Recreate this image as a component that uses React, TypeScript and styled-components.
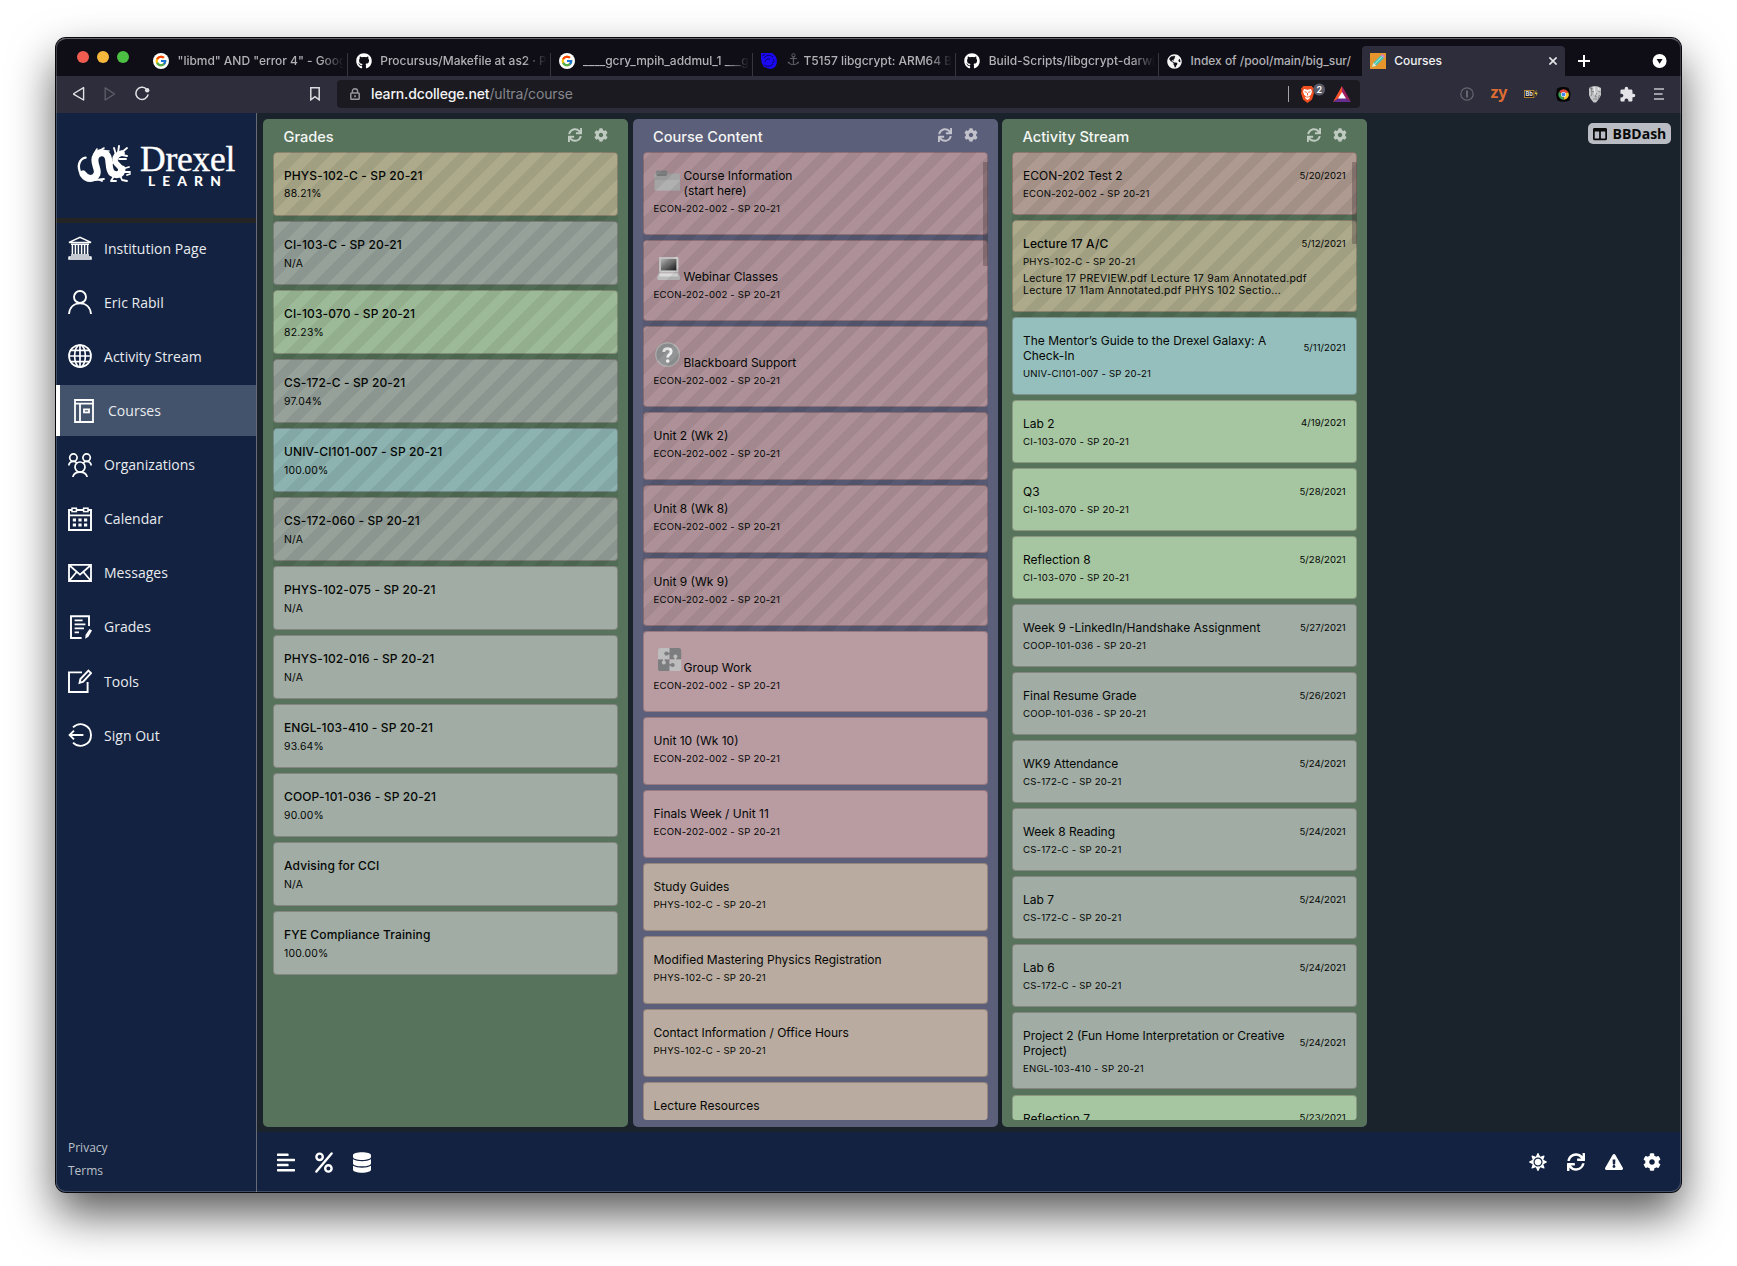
import React from "react";
import styled, { createGlobalStyle, css } from "styled-components";
import {
  FaGithub,
  FaCog,
  FaSync,
  FaDatabase,
  FaAlignLeft,
  FaSun,
  FaExclamationTriangle,
  FaColumns,
  FaGlobeAmericas,
} from "react-icons/fa";
import { FcGoogle } from "react-icons/fc";
import { MdExtension } from "react-icons/md";

const Global = createGlobalStyle`
  *, *::before, *::after { box-sizing: border-box; }
  html, body { margin: 0; padding: 0; background: #fff; }
  body { font-family: Inter, "Liberation Sans", sans-serif; overflow: hidden; }
  svg { display: block; flex: none; }
`;

/* ---------- window ---------- */

const Desktop = styled.div`
  width: 1737px;
  height: 1266px;
  padding: 38px 56px 74px;
`;

const Window = styled.div`
  width: 1625px;
  height: 1154px;
  border-radius: 10px;
  overflow: hidden;
  display: flex;
  flex-direction: column;
  background: #122240;
`;

const WindowShell = styled.div`
  position: relative;
  width: 1625px;
  height: 1154px;
  border-radius: 10px;
  box-shadow: 0 0 0 1px #08080c, 0 22px 46px rgba(0, 0, 0, 0.66);
  &::after {
    content: "";
    position: absolute;
    inset: 0;
    border-radius: 10px;
    border: 1px solid rgba(255, 255, 255, 0.2);
    border-top-color: rgba(255, 255, 255, 0.36);
    pointer-events: none;
  }
`;

/* ---------- tab strip ---------- */

const TabStrip = styled.div`
  height: 38px;
  flex: none;
  display: flex;
  align-items: flex-end;
  background: #0f0e17;
`;

const Lights = styled.div`
  width: 89px;
  height: 38px;
  padding: 13px 0 0 21px;
  display: flex;
  gap: 8px;
`;

const Light = styled.i<{ $c: string }>`
  width: 12px;
  height: 12px;
  border-radius: 50%;
  background: ${(p) => p.$c};
`;

const Tab = styled.div<{ $active?: boolean; $line?: boolean }>`
  width: 202.8px;
  height: 30px;
  padding: 0 8px;
  display: flex;
  align-items: center;
  gap: 8.5px;
  position: relative;
  border-radius: 4px 4px 0 0;
  background: ${(p) => (p.$active ? "#2d2d3b" : "transparent")};
  color: ${(p) => (p.$active ? "#f1f1f3" : "#b2b2b6")};
  ${(p) =>
    p.$line &&
    css`
      &::after {
        content: "";
        position: absolute;
        right: 0;
        bottom: 0;
        width: 1px;
        height: 23px;
        background: #37363f;
      }
    `}
`;

const TabTitle = styled.span<{ $fade?: boolean }>`
  flex: 1;
  min-width: 0;
  margin-right: -4px;
  overflow: hidden;
  white-space: nowrap;
  font-size: 12px;
  line-height: 18px;
  font-weight: 500;
  letter-spacing: -0.03px;
  ${(p) =>
    p.$fade &&
    css`
      mask-image: linear-gradient(90deg, #000 86%, transparent 100%);
    `}
`;

const AnchorGlyph = styled.span`
  font-family: "DejaVu Sans", sans-serif;
  font-size: 16px;
  line-height: 14px;
  color: #5c5c64;
`;

const NewTab = styled.div`
  flex: 1;
  height: 30px;
  padding: 0 9px 0 13px;
  display: flex;
  align-items: center;
  justify-content: space-between;
`;

/* ---------- toolbar ---------- */

const Toolbar = styled.div`
  height: 37px;
  flex: none;
  display: flex;
  align-items: center;
  background: #2d2d3b;
  padding-left: 16.5px;
  padding-bottom: 1px;
`;

const NavButtons = styled.div`
  width: 264.5px;
  display: flex;
  align-items: center;
  gap: 19px;
`;

const BookmarkSlot = styled.div`
  margin-left: auto;
  padding-right: 17px;
`;

const AddressBar = styled.div`
  width: 1023px;
  height: 28px;
  padding: 0 8px 0 13px;
  display: flex;
  align-items: center;
  border-radius: 4px;
  background: #1a1a20;
`;

const Url = styled.span`
  margin-left: 11px;
  flex: 1;
  font-size: 14px;
  line-height: 20px;
  letter-spacing: -0.15px;
  color: #85868c;
  b {
    font-weight: 500;
    color: #f3f3f5;
  }
`;

const Shields = styled.div`
  display: flex;
  align-items: center;
  gap: 6.5px;
  padding-right: 1px;
  i {
    width: 1px;
    height: 16px;
    margin-right: 4px;
    background: #a4a4aa;
  }
`;

const Extensions = styled.div`
  margin-left: auto;
  padding-right: 6px;
  display: flex;
`;

const Extension = styled.div`
  width: 32px;
  height: 28px;
  display: flex;
  align-items: center;
  justify-content: center;
  color: #e4e4e8;
`;

const ZyMark = styled.span`
  font: 700 16px/20px "Noto Sans", sans-serif;
  color: #dc6c33;
  margin-top: -4px;
`;

/* ---------- page ---------- */

const Page = styled.div`
  flex: 1;
  min-height: 0;
  display: flex;
`;

const Sidebar = styled.aside`
  width: 201px;
  flex: none;
  display: flex;
  flex-direction: column;
  border-right: 1px solid #666b76;
  background: #122240;
  font-family: "Open Sans", "Noto Sans", sans-serif;
`;

const Brand = styled.div`
  height: 110px;
  padding: 30px 0 0 21px;
  display: flex;
  gap: 9px;
  border-bottom: 5px solid #242424;
  color: #fff;
`;

const BrandText = styled.div`
  display: flex;
  flex-direction: column;
`;

const BrandName = styled.span`
  font: 400 35.5px/32px "Liberation Serif", serif;
  letter-spacing: -0.25px;
  -webkit-text-stroke: 0.4px #fff;
`;

const BrandSub = styled.span`
  font: 900 13.8px/14px Lato, sans-serif;
  letter-spacing: 7.1px;
  padding-left: 8px;
  margin-top: -1px;
`;

const Nav = styled.nav`
  display: flex;
  flex-direction: column;
  gap: 3.5px;
`;

const NavItem = styled.a<{ $active?: boolean }>`
  height: 50.6px;
  padding-left: ${(p) => (p.$active ? 12 : 12)}px;
  display: flex;
  align-items: center;
  gap: 12px;
  font-size: 14px;
  letter-spacing: 0.03px;
  color: #e9ebef;
  ${(p) =>
    p.$active &&
    css`
      border-left: 4px solid #fff;
      background: #43536c;
    `}
  svg {
    color: #fff;
  }
`;

const Legal = styled.div`
  margin-top: auto;
  padding: 0 0 10px 12px;
  display: flex;
  flex-direction: column;
  font-size: 12px;
  line-height: 23px;
  color: #bcc1c9;
`;

const Main = styled.main`
  flex: 1;
  display: flex;
  flex-direction: column;
  background: #1a232c;
`;

const Board = styled.div`
  flex: 1;
  min-height: 0;
  padding: 6px 10px 5px 6px;
  display: flex;
  gap: 4.5px;
`;

const Column = styled.section<{ $c: string }>`
  width: 365px;
  height: 1008px;
  flex: none;
  padding: 0 10px 7px;
  display: flex;
  flex-direction: column;
  border-radius: 5px;
  background: ${(p) => p.$c};
`;

const ColumnHead = styled.header`
  height: 33.3px;
  flex: none;
  padding: 3px 10px 0 10.5px;
  display: flex;
  align-items: center;
  gap: 12px;
  color: rgba(255, 255, 255, 0.62);
  h2 {
    margin: 0;
    flex: 1;
    font-size: 14.6px;
    line-height: 20px;
    font-weight: 500;
    color: #f4f6f4;
    letter-spacing: 0;
  }
  svg {
    margin-top: -5px;
  }
`;

const List = styled.div`
  position: relative;
  flex: 1;
  min-height: 0;
  overflow: hidden;
  border-radius: 4px;
`;

const Thumb = styled.div<{ $h: number }>`
  position: absolute;
  right: 0;
  top: 9.5px;
  width: 5px;
  height: ${(p) => p.$h}px;
  border-radius: 1px;
  background: rgba(60, 45, 50, 0.32);
`;

const Slot = styled.div<{ $striped?: boolean }>`
  position: relative;
  padding-bottom: 5.64px;
  ${(p) =>
    p.$striped &&
    css`
      &::after {
        content: "";
        position: absolute;
        inset: 0;
        background:
          repeating-linear-gradient(-45deg, transparent 0 10px, rgba(0, 0, 0, 0.065) 10px 20px),
          rgba(0, 0, 0, 0.06);
      }
    `}
`;

const Card = styled.article<{ $c: string; $h: number }>`
  height: ${(p) => p.$h}px;
  padding: 14.8px 10.3px 0 10px;
  border: 1px solid rgba(60, 30, 35, 0.27);
  border-radius: 4px;
  background: ${(p) => p.$c};
  background-clip: border-box;
  color: #050705;
`;

const TitleRow = styled.div`
  display: flex;
  align-items: flex-end;
`;

const Title = styled.h3<{ $strong?: boolean }>`
  margin: 0;
  flex: 1;
  font-size: 12px;
  line-height: 15.1px;
  font-weight: ${(p) => (p.$strong ? 500 : 400)};
  letter-spacing: ${(p) => (p.$strong ? 0.12 : 0)}px;
`;

const When = styled.time`
  align-self: center;
  font-size: 9.6px;
  line-height: 12px;
`;

const Sub = styled.p<{ $big?: boolean }>`
  margin: ${(p) => (p.$big ? 4.3 : 3.6)}px 0 0;
  font-size: ${(p) => (p.$big ? 10.4 : 9.6)}px;
  line-height: 14px;
  letter-spacing: 0.2px;
`;

const Excerpt = styled.p`
  margin: 4px 0 0;
  font-size: 10.5px;
  line-height: 12px;
  letter-spacing: 0.25px;
  white-space: nowrap;
`;

const DashBadge = styled.div`
  margin-left: auto;
  margin-top: 4px;
  width: 83px;
  height: 21px;
  padding-left: 5px;
  display: flex;
  align-items: center;
  gap: 5.5px;
  border-radius: 5px;
  background: #b9bcc2;
  color: #0a0a0a;
  font: 700 14px/20px "Open Sans", "Noto Sans", sans-serif;
`;

const Footer = styled.footer`
  height: 60px;
  flex: none;
  padding: 0 20px 0;
  display: flex;
  align-items: center;
  justify-content: space-between;
  background: #122240;
  color: #fff;
`;

const IconGroup = styled.div`
  display: flex;
  align-items: center;
  gap: 20px;
  svg {
    width: 18px;
  }
`;

/* ---------- drawings ---------- */

const Dragon = () => (
  <svg width="54" height="40" viewBox="0 -1 54 40" fill="none" stroke="#fff" strokeLinecap="round" strokeLinejoin="round">
    <path d="M8.5 13.6 C2 15 0.5 22 3 28 C5 32 9 34 14 34" strokeWidth="2.4" />
    <path d="M6 30 C10 36 17 36 20 30 C22 25 15 18 19 12 C22 7 29 8 31 13 C33 18 31 25 35 29 C39 32 45 31 45 25" strokeWidth="7" />
    <path d="M44 27 C45 22 38 21 38 16 C38 12 41 10 45 9" strokeWidth="5.6" />
    <path d="M39 11 L37 4 M41 9 L42 2 M44 9 L50 4 M45 11 L50 12 M42 15 L49 15 M36 18 L33 22" strokeWidth="1.9" />
    <path d="M45 25 L52 23 M46 28 L53 28 M43 31 L45 36 L50 37 M37 32 L34 37 L39 37 M20 35 L25 37 M18 36 L27 35 M50 31 L53 30" strokeWidth="1.8" />
    <path d="M17 10 L20 5 M22 7 L27 4 M28 7 L32 7" strokeWidth="1.6" />
  </svg>
);

const navSvg = { width: 24, height: 24, viewBox: "0 0 24 24", fill: "none", stroke: "currentColor", strokeWidth: 1.9 } as const;

const InstitutionIcon = () => (
  <svg {...navSvg} strokeWidth="1.5">
    <path d="M1 6.4 L12 1.4 L23 6.4 Z" />
    <path d="M3 8.2 H21" />
    <path d="M4.4 9 V18 M7.4 9 V18 M10.4 9 V18 M13.6 9 V18 M16.6 9 V18 M19.6 9 V18" />
    <path d="M3 19 H21 M1 20.4 V23 H23 V20.4 M1 21 H23" />
  </svg>
);
const PersonIcon = () => (
  <svg {...navSvg}>
    <circle cx="12" cy="7" r="6" />
    <path d="M1 24 C1.6 17 6 13.4 12 13.4 C18 13.4 22.4 17 23 24" />
  </svg>
);
const GlobeIcon = () => (
  <svg {...navSvg} strokeWidth="1.7">
    <circle cx="12" cy="12" r="11" />
    <ellipse cx="12" cy="12" rx="5.4" ry="11" />
    <path d="M12 1 V23 M1 12 H23 M3 6.4 H21 M3 17.6 H21" />
  </svg>
);
const CoursesIcon = () => (
  <svg {...navSvg} strokeWidth="1.8">
    <path d="M21 4.6 V1 H3 V23 H21 V4.6 H3" />
    <path d="M8 5 V23" />
    <rect x="12" y="10.4" width="5" height="3" />
  </svg>
);
const GroupIcon = () => (
  <svg {...navSvg} strokeWidth="1.7">
    <circle cx="5.4" cy="4.6" r="3.7" />
    <circle cx="18.6" cy="4.6" r="3.7" />
    <circle cx="12" cy="14" r="5" />
    <path d="M0.8 12.5 C1.2 9.6 3 8.4 5.4 8.4 C7 8.4 8 9 8.8 10 M23.2 12.5 C22.8 9.6 21 8.4 18.6 8.4 C17 8.4 16 9 15.2 10" />
    <path d="M4.8 24 C5.6 21 8 19.2 12 19.2 C16 19.2 18.4 21 19.2 24" />
  </svg>
);
const CalendarIcon = () => (
  <svg {...navSvg}>
    <path d="M4 3 H1 V23 H23 V3 H20 M8.6 3 H15.4 M1 8.4 H23" />
    <rect x="4" y="1.2" width="4.4" height="3.4" strokeWidth="1.5" />
    <rect x="15.6" y="1.2" width="4.4" height="3.4" strokeWidth="1.5" />
    <path d="M4.8 13 H8 M10.4 13 H13.6 M16 13 H19.2 M4.8 18 H8 M10.4 18 H13.6 M16 18 H19.2" strokeWidth="2.8" />
  </svg>
);
const MailIcon = () => (
  <svg {...navSvg} strokeWidth="1.8">
    <path d="M1 3.8 H23 V20 H1 Z M1 4 L12 13.6 L23 4 M1 20 L8.6 11 M23 20 L15.4 11" />
  </svg>
);
const GradesIcon = () => (
  <svg {...navSvg}>
    <path d="M21 11 V1.2 H3 V23 H13.6" />
    <path d="M6.6 5.4 H14.6 M6.6 9.4 H17.4 M6.6 13.4 H16 M6.6 17.4 H11" strokeWidth="1.7" />
    <path d="M17.2 23.8 L17.6 19.8 L21.6 14 L24 15.6 L20.4 21.8 Z" fill="currentColor" stroke="none" />
  </svg>
);
const ToolsIcon = () => (
  <svg {...navSvg}>
    <path d="M14 3.4 H1 V23 H19.6 V13" />
    <path d="M11.6 13.8 L12.4 10 L20.4 1.6 L23 4.2 L15.2 12.6 Z" />
  </svg>
);
const SignOutIcon = () => (
  <svg {...navSvg}>
    <path d="M5 4.4 C12 -2.4 23 2.4 23 12 C23 21.6 12 26.4 5 19.6" />
    <path d="M1.6 12 H15.4 M6 7.6 L1.6 12 L6 16.4" />
  </svg>
);

const FolderArt = () => (
  <svg width="30" height="28" viewBox="0 0 30 28">
    <path d="M2 2 Q2 0.6 3.4 0.6 H12 Q13.4 0.6 13.4 2.4 L13 6 H2 Z" fill="#8b8c8e" />
    <rect x="0.6" y="3.4" width="25.4" height="17" rx="1" fill="#b0b0b0" />
    <rect x="0.6" y="10" width="25.4" height="10.4" rx="1" fill="#bcbcbc" />
    <path d="M1.4 3.4 H13.6 L12 6 H3 Z" fill="#868789" />
  </svg>
);
const LaptopArt = () => (
  <svg width="30" height="28" viewBox="0 0 30 28">
    <defs>
      <linearGradient id="screen" x1="0" y1="0" x2="1" y2="1">
        <stop offset="0" stopColor="#d0d0d0" />
        <stop offset="0.7" stopColor="#4a4a4a" />
        <stop offset="1" stopColor="#1c1c1c" />
      </linearGradient>
    </defs>
    <rect x="5" y="1" width="19.4" height="15.6" rx="1.4" fill="#dadada" />
    <rect x="7" y="3" width="15.4" height="11.4" fill="url(#screen)" />
    <path d="M5 16.4 H24.4 L26.4 22 Q26.4 24 24.4 24 H5 Q3 24 3 22 Z" fill="#c8c8c8" />
    <path d="M6 17.6 H23.4 L24.4 20.6 H5 Z" fill="#eaeaea" />
  </svg>
);
const HelpArt = () => (
  <svg width="30" height="28" viewBox="0 0 30 28">
    <circle cx="13.6" cy="12.6" r="11.8" fill="#9d9e9f" stroke="#c4c4c4" strokeWidth="1.2" />
    <path d="M9.8 10 Q9.8 6.6 13.6 6.6 Q17.2 6.6 17.2 9.6 Q17.2 11.4 15.2 12.6 Q13.7 13.6 13.7 15.4" fill="none" stroke="#fff" strokeWidth="2.8" />
    <circle cx="13.7" cy="19" r="1.8" fill="#fff" />
  </svg>
);
const PuzzleArt = () => (
  <svg width="30" height="28" viewBox="0 0 30 28">
    <path d="M4 3.6 Q4 1 6.6 1 H15.6 V12.4 H4 Z" fill="#bdbdbd" />
    <path d="M15.6 1 H24.6 Q27.2 1 27.2 3.6 V12.4 H15.6 Z" fill="#7c7d7e" />
    <path d="M4 12.4 H15.6 V24 H6.6 Q4 24 4 21.4 Z" fill="#7c7d7e" />
    <path d="M15.6 12.4 H27.2 V21.4 Q27.2 24 24.6 24 H15.6 Z" fill="#bdbdbd" />
    <path d="M11.6 6.6 H16 M15 18 H19" stroke="#7c7d7e" strokeWidth="1.6" />
    <circle cx="12.4" cy="6.6" r="2.1" fill="#7c7d7e" />
    <circle cx="18.6" cy="18" r="2.1" fill="#7c7d7e" />
    <circle cx="21.4" cy="9.4" r="2" fill="#bdbdbd" />
    <path d="M20.6 9 H22.2 V13 H20.6 Z" fill="#bdbdbd" />
    <circle cx="9.8" cy="15.4" r="2" fill="#bdbdbd" />
    <path d="M9 11.8 H10.6 V15 H9 Z" fill="#bdbdbd" />
  </svg>
);

const PercentIcon = () => (
  <svg height="21" viewBox="0 0 18 21" fill="none" stroke="currentColor" strokeWidth="2.4" strokeLinecap="round">
    <path d="M1.4 19.6 L16.6 1.4" />
    <circle cx="4.6" cy="4.8" r="3.2" />
    <circle cx="13.4" cy="16.4" r="3.2" />
  </svg>
);

const GoogleMark = () => (
  <svg width="16" height="16" viewBox="0 0 16 16">
    <circle cx="8" cy="8" r="8" fill="#fff" />
    <FcGoogle x="1.6" y="1.6" width="12.8" height="12.8" size={12.8} />
  </svg>
);
const BlueMark = () => (
  <svg width="16" height="16" viewBox="0 0 16 16">
    <path d="M0 0 H11 Q16 3 16 9 Q15 16 9 16 L3 14 Q0 10 0 6 Z" fill="#1a09f2" />
    <path d="M3 5 Q7 0 12 4 M4 9 Q5 5 9 6 M3 12 Q8 15 12 11 M12 6 Q15 9 11 10 M1 3 L4 1" fill="none" stroke="#0b0668" strokeWidth="1" />
  </svg>
);
const PencilMark = () => (
  <svg width="16" height="16" viewBox="0 0 16 16">
    <rect width="16" height="16" fill="#e6952c" />
    <path d="M2 14 L3.4 9.8 L11 2.2 L14 5 L6.2 12.8 Z" fill="#49c3b6" />
    <path d="M11 2.2 L12.2 1.2 Q14 1.6 14.8 3.8 L14 5 Z" fill="#d77be0" />
    <path d="M2 14 L3.4 9.8 L6.2 12.8 Z" fill="#f3e3c4" />
    <path d="M4.6 11 L12.4 3.4" stroke="#b8f0d9" strokeWidth="1" />
  </svg>
);
const BraveMark = () => (
  <svg width="27" height="22" viewBox="0 0 27 22">
    <path d="M3.4 3 H11.6 L14 5.8 L13.4 8 L14 10 L12 16.4 L7.5 20 L3 16.4 L1 10 L1.6 8 L1 5.8 Z" fill="#f0501f" />
    <path d="M4 6 L7.5 6.8 L11 6 L12 8.4 L10.8 12 L9 13.2 L10 15 L7.5 17 L5 15 L6 13.2 L4.2 12 L3 8.4 Z" fill="#fff" />
    <path d="M4.6 8.6 L6.8 9.4 M10.4 8.6 L8.2 9.4 M7.5 10 V12.4 M6.2 14 H8.8" stroke="#f0501f" strokeWidth="0.9" />
    <rect x="13.4" y="0.6" width="11.6" height="11.8" rx="5.4" fill="#595b69" />
    <text x="19.3" y="9.8" textAnchor="middle" fontFamily="Inter" fontWeight="600" fontSize="9" fill="#fff">2</text>
  </svg>
);
const BatMark = () => (
  <svg width="18" height="16" viewBox="0 0 18 16">
    <path d="M9 0 L0 16 L9 10 Z" fill="#f7522b" />
    <path d="M9 0 L18 16 L9 10 Z" fill="#9e1f63" />
    <path d="M0 16 H18 L9 10 Z" fill="#662d91" />
    <path d="M9 6 L13 12.6 H5 Z" fill="#fff" />
  </svg>
);
const ChromeMark = () => (
  <svg width="15" height="15" viewBox="0 0 15 15">
    <path d="M1 1.5 Q7 -1.5 12.5 1 L14.6 6 L13.6 13.5 Q7 16 1.5 13.6 L0 8 Z" fill="#060606" />
    <path d="M7.5 7.5 L3 5 A5.2 5.2 0 0 1 12.2 5 Z" fill="#e0463a" />
    <path d="M7.5 7.5 L12.2 5 A5.2 5.2 0 0 1 7.5 12.7 Z" fill="#f4c430" />
    <path d="M7.5 7.5 L3 5 A5.2 5.2 0 0 0 7.5 12.7 Z" fill="#38a353" />
    <circle cx="7.5" cy="7.5" r="2.5" fill="#fff" />
    <circle cx="7.5" cy="7.5" r="1.9" fill="#4286f4" />
  </svg>
);
const FaceMark = () => (
  <svg width="14" height="18" viewBox="0 0 14 18">
    <path d="M1 3 Q7 -1 13 3 L13 10 Q11 15 8 17.4 L5.6 17.4 Q2 14 1 10 Z" fill="#c4c5c7" />
    <path d="M1.4 3 L5 4 M3 1.6 L4 9 L3 11 M8.6 8 L7 11.6 L9 12 M10.4 6.6 L12.6 7 M4 6.6 H6.4 M5.4 14 L9 14 M11.4 10 L10 15" fill="none" stroke="#696a70" strokeWidth="0.7" />
    <path d="M6 2 L7.2 9.6 M10.4 2.6 L11 5" stroke="#f2f2f2" strokeWidth="1.1" />
  </svg>
);
const BbMark = () => (
  <svg width="14" height="10" viewBox="0 0 14 10">
    <rect x="0.5" y="1.5" width="9.4" height="7" fill="#15151b" stroke="#b98a35" strokeWidth="0.9" />
    <text x="1.5" y="7.1" fontFamily="Inter" fontWeight="700" fontSize="5.6" fill="#e8e8e8">Bb</text>
    <path d="M12.4 0.6 L10.8 5 H12.4 L11.6 8 L13.8 3.8 H12.2 Z" fill="#e4c13c" />
  </svg>
);

/* ---------- data ---------- */

const TERM = "SP 20-21";
const pale = {
  gray: "#a0aca4",
  khaki: "#b7b594",
  green: "#a6c6a1",
  teal: "#95bfbc",
  rose: "#b99ba2",
  clay: "#b9a499",
  sand: "#b9ab9f",
};

type Entry = {
  title: React.ReactNode;
  sub: string;
  c: string;
  h?: number;
  striped?: boolean;
  date?: string;
  strong?: boolean;
  art?: React.ReactNode;
  excerpt?: React.ReactNode;
};

const grades: Entry[] = [
  { title: `PHYS-102-C - ${TERM}`, sub: "88.21%", c: pale.khaki, striped: true },
  { title: `CI-103-C - ${TERM}`, sub: "N/A", c: pale.gray, striped: true },
  { title: `CI-103-070 - ${TERM}`, sub: "82.23%", c: pale.green, striped: true },
  { title: `CS-172-C - ${TERM}`, sub: "97.04%", c: pale.gray, striped: true },
  { title: `UNIV-CI101-007 - ${TERM}`, sub: "100.00%", c: pale.teal, striped: true },
  { title: `CS-172-060 - ${TERM}`, sub: "N/A", c: pale.gray, striped: true },
  { title: `PHYS-102-075 - ${TERM}`, sub: "N/A", c: pale.gray },
  { title: `PHYS-102-016 - ${TERM}`, sub: "N/A", c: pale.gray },
  { title: `ENGL-103-410 - ${TERM}`, sub: "93.64%", c: pale.gray },
  { title: `COOP-101-036 - ${TERM}`, sub: "90.00%", c: pale.gray },
  { title: "Advising for CCI", sub: "N/A", c: pale.gray },
  { title: "FYE Compliance Training", sub: "100.00%", c: pale.gray },
];

const ECON = `ECON-202-002 - ${TERM}`;
const PHYS = `PHYS-102-C - ${TERM}`;
const content: Entry[] = [
  { title: <>Course Information<br />(start here)</>, sub: ECON, c: pale.rose, h: 82.4, striped: true, art: <FolderArt /> },
  { title: "Webinar Classes", sub: ECON, c: pale.rose, h: 80.4, striped: true, art: <LaptopArt /> },
  { title: "Blackboard Support", sub: ECON, c: pale.rose, h: 80.4, striped: true, art: <HelpArt /> },
  { title: "Unit 2 (Wk 2)", sub: ECON, c: pale.rose, striped: true },
  { title: "Unit 8 (Wk 8)", sub: ECON, c: pale.rose, striped: true },
  { title: "Unit 9 (Wk 9)", sub: ECON, c: pale.rose, striped: true },
  { title: "Group Work", sub: ECON, c: pale.rose, h: 80.4, art: <PuzzleArt /> },
  { title: "Unit 10 (Wk 10)", sub: ECON, c: pale.rose },
  { title: "Finals Week / Unit 11", sub: ECON, c: pale.rose },
  { title: "Study Guides", sub: PHYS, c: pale.sand },
  { title: "Modified Mastering Physics Registration", sub: PHYS, c: pale.sand },
  { title: "Contact Information / Office Hours", sub: PHYS, c: pale.sand },
  { title: "Lecture Resources", sub: PHYS, c: pale.sand },
];

const CI = `CI-103-070 - ${TERM}`;
const CS = `CS-172-C - ${TERM}`;
const COOP = `COOP-101-036 - ${TERM}`;
const stream: Entry[] = [
  { title: "ECON-202 Test 2", sub: ECON, c: pale.clay, striped: true, date: "5/20/2021" },
  {
    title: "Lecture 17 A/C",
    sub: PHYS,
    c: pale.khaki,
    h: 91.4,
    striped: true,
    strong: true,
    date: "5/12/2021",
    excerpt: (
      <>
        Lecture 17 PREVIEW.pdf Lecture 17 9am Annotated.pdf
        <br />
        Lecture 17 11am Annotated.pdf PHYS 102 Sectio...
      </>
    ),
  },
  { title: <>The Mentor’s Guide to the Drexel Galaxy: A<br />Check-In</>, sub: `UNIV-CI101-007 - ${TERM}`, c: pale.teal, h: 77.2, date: "5/11/2021" },
  { title: "Lab 2", sub: CI, c: pale.green, date: "4/19/2021" },
  { title: "Q3", sub: CI, c: pale.green, date: "5/28/2021" },
  { title: "Reflection 8", sub: CI, c: pale.green, date: "5/28/2021" },
  { title: "Week 9 -LinkedIn/Handshake Assignment", sub: COOP, c: pale.gray, date: "5/27/2021" },
  { title: "Final Resume Grade", sub: COOP, c: pale.gray, date: "5/26/2021" },
  { title: "WK9 Attendance", sub: CS, c: pale.gray, date: "5/24/2021" },
  { title: "Week 8 Reading", sub: CS, c: pale.gray, date: "5/24/2021" },
  { title: "Lab 7", sub: CS, c: pale.gray, date: "5/24/2021" },
  { title: "Lab 6", sub: CS, c: pale.gray, date: "5/24/2021" },
  { title: <>Project 2 (Fun Home Interpretation or Creative<br />Project)</>, sub: `ENGL-103-410 - ${TERM}`, c: pale.gray, h: 77.2, date: "5/24/2021" },
  { title: "Reflection 7", sub: CI, c: pale.green, date: "5/23/2021" },
];

const tabs = [
  { icon: <GoogleMark />, title: '"libmd" AND "error 4" - Google' },
  { icon: <FaGithub size={16} color="#fff" />, title: "Procursus/Makefile at as2 · Proc" },
  { icon: <GoogleMark />, title: "____gcry_mpih_addmul_1 ___gcry" },
  { icon: <BlueMark />, title: <><AnchorGlyph>⚓</AnchorGlyph> T5157 libgcrypt: ARM64 Bu</> },
  { icon: <FaGithub size={16} color="#fff" />, title: "Build-Scripts/libgcrypt-darwin" },
];

const navItems = [
  { icon: <InstitutionIcon />, label: "Institution Page" },
  { icon: <PersonIcon />, label: "Eric Rabil" },
  { icon: <GlobeIcon />, label: "Activity Stream" },
  { icon: <CoursesIcon />, label: "Courses", active: true },
  { icon: <GroupIcon />, label: "Organizations" },
  { icon: <CalendarIcon />, label: "Calendar" },
  { icon: <MailIcon />, label: "Messages" },
  { icon: <GradesIcon />, label: "Grades" },
  { icon: <ToolsIcon />, label: "Tools" },
  { icon: <SignOutIcon />, label: "Sign Out" },
];

/* ---------- composition ---------- */

function Panel(props: { name: string; color: string; items: Entry[]; h: number; thumb?: number; big?: boolean }) {
  return (
    <Column $c={props.color}>
      <ColumnHead>
        <h2>{props.name}</h2>
        <FaSync size={14} />
        <FaCog size={14} />
      </ColumnHead>
      <List>
        {props.items.map((e, i) => (
          <Slot key={i} $striped={e.striped}>
            <Card $c={e.c} $h={e.h ?? props.h}>
              <TitleRow>
                {e.art}
                <Title $strong={props.big || e.strong}>{e.title}</Title>
                {e.date && <When>{e.date}</When>}
              </TitleRow>
              <Sub $big={props.big}>{e.sub}</Sub>
              {e.excerpt && <Excerpt>{e.excerpt}</Excerpt>}
            </Card>
          </Slot>
        ))}
        {props.thumb && <Thumb $h={props.thumb} />}
      </List>
    </Column>
  );
}

export default function App() {
  return (
    <Desktop>
      <Global />
      <WindowShell>
        <Window>
          <TabStrip>
            <Lights>
              <Light $c="#f05d50" />
              <Light $c="#f5b83d" />
              <Light $c="#4cc043" />
            </Lights>
            {tabs.map((t, i) => (
              <Tab key={i} $line>
                {t.icon}
                <TabTitle $fade>{t.title}</TabTitle>
              </Tab>
            ))}
            <Tab>
              <FaGlobeAmericas size={15} color="#f4f4f4" />
              <TabTitle>Index of /pool/main/big_sur/</TabTitle>
            </Tab>
            <Tab $active>
              <PencilMark />
              <TabTitle>Courses</TabTitle>
              <svg width="8" height="8" viewBox="0 0 8 8" stroke="#e6e6ea" strokeWidth="1.6">
                <path d="M0.4 0.4 L7.6 7.6 M7.6 0.4 L0.4 7.6" />
              </svg>
            </Tab>
            <NewTab>
              <svg width="12" height="12" viewBox="0 0 12 12" stroke="#fff" strokeWidth="2">
                <path d="M6 0 V12 M0 6 H12" />
              </svg>
              <svg width="20" height="14" viewBox="0 0 20 14">
                <circle cx="7.6" cy="7" r="7" fill="#fff" />
                <path d="M4.6 5 H10.6 L7.6 9.8 Z" fill="#0f0e17" />
              </svg>
            </NewTab>
          </TabStrip>

          <Toolbar>
            <NavButtons>
              <svg width="12" height="16" viewBox="0 0 12 16" fill="none" stroke="#e2e2e6" strokeWidth="1.4" strokeLinejoin="round">
                <path d="M10.6 1.6 V14 L0.9 8.4 Q0.5 8 0.9 7.5 Z" />
              </svg>
              <svg width="12" height="16" viewBox="0 0 12 16" fill="none" stroke="#5d5d69" strokeWidth="1.4" strokeLinejoin="round">
                <path d="M1.2 1.8 V14 L10.6 8 Z" />
              </svg>
              <svg width="15" height="16" viewBox="0 0 15 16" fill="none" stroke="#e2e2e6" strokeWidth="1.5">
                <path d="M11.2 2.9 A6.1 6.1 0 1 0 13.1 8.4" />
                <circle cx="12.2" cy="4.2" r="2.2" fill="#e2e2e6" stroke="none" />
              </svg>
              <BookmarkSlot>
                <svg width="10" height="14" viewBox="0 0 10 14" fill="none" stroke="#dcdce2" strokeWidth="1.5">
                  <path d="M0.8 0.8 H9.2 V12.8 L5 9.6 L0.8 12.8 Z" />
                </svg>
              </BookmarkSlot>
            </NavButtons>
            <AddressBar>
              <svg width="10" height="12" viewBox="0 0 10 12">
                <path d="M2.4 5 V3.2 Q2.4 0.8 5 0.8 Q7.6 0.8 7.6 3.2 V5" fill="none" stroke="#97979d" strokeWidth="1.4" />
                <rect x="0.8" y="5" width="8.4" height="6.2" rx="0.8" fill="none" stroke="#97979d" strokeWidth="1.5" />
                <rect x="4.2" y="7.2" width="1.6" height="2" fill="#97979d" />
              </svg>
              <Url>
                <b>learn.dcollege.net</b>/ultra/course
              </Url>
              <Shields>
                <i />
                <BraveMark />
                <BatMark />
              </Shields>
            </AddressBar>
            <Extensions>
              <Extension>
                <svg width="14" height="14" viewBox="0 0 14 14" fill="none" stroke="#666670" strokeWidth="1.2">
                  <circle cx="7" cy="7" r="6.2" />
                  <path d="M7 3.6 V10.4" strokeWidth="2" />
                </svg>
              </Extension>
              <Extension><ZyMark>zy</ZyMark></Extension>
              <Extension><BbMark /></Extension>
              <Extension><ChromeMark /></Extension>
              <Extension><FaceMark /></Extension>
              <Extension><MdExtension size={17} /></Extension>
              <Extension>
                <svg width="10" height="12" viewBox="0 0 10 12" stroke="#c4c4ca" strokeWidth="1.6">
                  <path d="M0 1 H10 M0 6 H8.6 M0 11 H10" />
                </svg>
              </Extension>
            </Extensions>
          </Toolbar>

          <Page>
            <Sidebar>
              <Brand>
                <Dragon />
                <BrandText>
                  <BrandName>Drexel</BrandName>
                  <BrandSub>LEARN</BrandSub>
                </BrandText>
              </Brand>
              <Nav>
                {navItems.map((n) => (
                  <NavItem key={n.label} $active={n.active}>
                    {n.icon}
                    {n.label}
                  </NavItem>
                ))}
              </Nav>
              <Legal>
                <span>Privacy</span>
                <span>Terms</span>
              </Legal>
            </Sidebar>
            <Main>
              <Board>
                <Panel name="Grades" color="#57735b" items={grades} h={63.4} big />
                <Panel name="Course Content" color="#5c5f79" items={content} h={67.36} thumb={104} />
                <Panel name="Activity Stream" color="#57735b" items={stream} h={62.4} thumb={82} />
                <DashBadge>
                  <FaColumns size={14} />
                  BBDash
                </DashBadge>
              </Board>
              <Footer>
                <IconGroup>
                  <FaAlignLeft size={21} />
                  <PercentIcon />
                  <FaDatabase size={21} />
                </IconGroup>
                <IconGroup>
                  <FaSun size={18} />
                  <FaSync size={18} />
                  <FaExclamationTriangle size={18} />
                  <FaCog size={18} />
                </IconGroup>
              </Footer>
            </Main>
          </Page>
        </Window>
      </WindowShell>
    </Desktop>
  );
}
